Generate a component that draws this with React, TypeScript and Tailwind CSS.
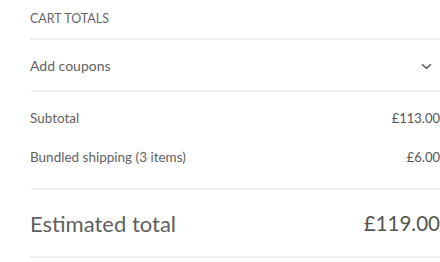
import React from 'react';

const Row = ({ label, value }: { label: string; value: string }) => (
  <div className="flex items-center justify-between h-[39px]">
    <span>{label}</span>
    <span className="text-[#555] text-[13px]">{value}</span>
  </div>
);

export default function App() {
  return (
    <div className="w-[440px] h-[262px] bg-white pl-[30px] font-['Lato',sans-serif] text-[#626262] text-[13.5px] overflow-hidden">
      <div className="h-[38px] flex items-center text-[12.5px] uppercase text-[#666]">Cart totals</div>

      <div className="border-t-2 border-[#efefef] h-[52px] flex items-center justify-between pr-[8px]">
        <span className="text-[14px]">Add coupons</span>
        <svg width="11" height="7" viewBox="0 0 11 7" fill="none" className="mt-[2px]">
          <path d="M1 1.2 L5.5 5.2 L10 1.2" stroke="#555" strokeWidth="1.5" />
        </svg>
      </div>

      <div className="border-t-2 border-[#efefef] pt-[7px] pb-[11px]">
        <Row label="Subtotal" value="£113.00" />
        <Row label="Bundled shipping (3 items)" value="£6.00" />
      </div>

      <div className="border-t-2 border-[#efefef] h-[68px] flex items-center justify-between">
        <span className="text-[22px] text-[#5f5f5f]">Estimated total</span>
        <span className="text-[20.5px] text-[#555]">£119.00</span>
      </div>
      <div className="border-t-2 border-[#efefef]" />
    </div>
  );
}
